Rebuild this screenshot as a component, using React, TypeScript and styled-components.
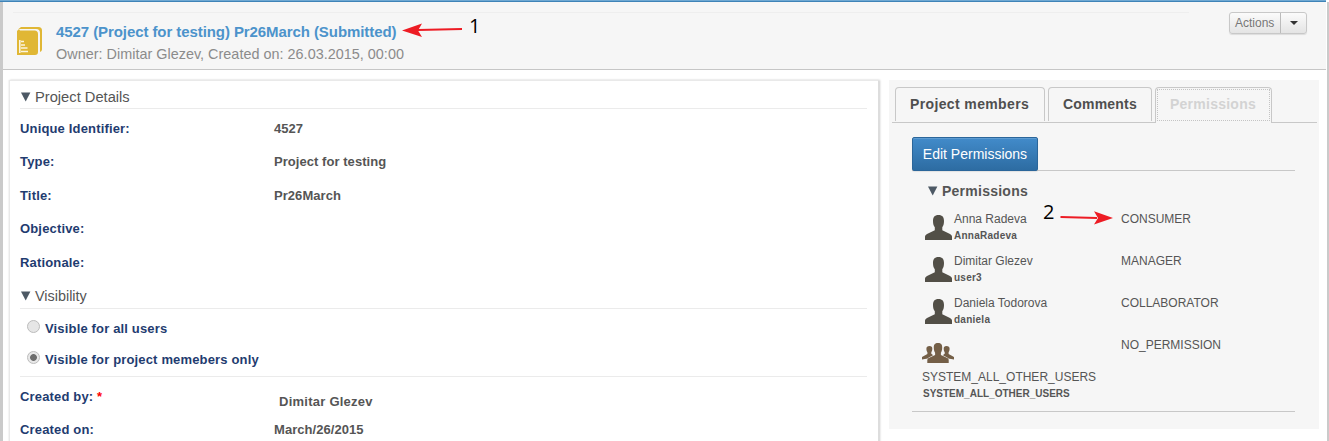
import React from "react";
import styled, { createGlobalStyle } from "styled-components";

const GlobalStyle = createGlobalStyle`
  * { box-sizing: border-box; }
  body {
    margin: 0;
    overflow: hidden;
    background: #fff;
    color: #555;
    font-family: "Liberation Sans", Arial, sans-serif;
  }
`;

const Page = styled.div`
  position: relative;
  width: 1329px;
  height: 441px;
  overflow: hidden;
  display: flex;
  flex-direction: column;
`;

const TopBar = styled.div`
  flex: none;
  width: 1326px;
  height: 2px;
  background: linear-gradient(#6fa8d2 50%, #3f83b7 50%);
`;

const Frame = styled.div`
  flex: 1;
  min-height: 0;
  border-left: 3px solid #cacaca;
  border-right: 2px solid #cacaca;
`;

const Header = styled.header`
  display: flex;
  align-items: flex-start;
  width: 1323px;
  height: 68px;
  padding: 10px 19px 0 10px;
  background: #f6f6f6;
  border-bottom: 1px solid #c6c6c6;
`;

const HeaderMain = styled.div`
  display: flex;
  width: 1176px;
  padding: 14px 0 0 4px;
  border-top: 1px solid #eee;
`;

const HeaderText = styled.div`
  margin: -6px 0 0 14px;
`;

const Title = styled.h1`
  margin: 0;
  font-size: 15px;
  line-height: 22px;
  letter-spacing: -0.08px;
  color: #4c93cb;
  white-space: nowrap;
`;

const Subtitle = styled.div`
  font-size: 14.4px;
  line-height: 22px;
  letter-spacing: 0.02px;
  color: #8b8b8b;
  white-space: nowrap;
`;

const SplitButton = styled.div`
  display: flex;
  height: 22px;
  margin-left: auto;
  border: 1px solid #c8c8c8;
  border-radius: 3px;
  background: linear-gradient(#fbfbfb, #e4e4e4);
  box-shadow: 0 1px 1px rgba(0, 0, 0, 0.1);
  overflow: hidden;
`;

const ActionLabel = styled.span`
  width: 50px;
  padding-left: 5px;
  font-size: 12px;
  line-height: 20px;
  color: #777;
`;

const CaretCell = styled.span`
  display: flex;
  align-items: center;
  justify-content: center;
  width: 26px;
  border-left: 1px solid #bbb;
  padding-bottom: 1px;
`;

const Body = styled.div`
  display: flex;
  align-items: flex-start;
  gap: 10px;
  padding: 10px 0 0 6px;
`;

const Details = styled.main`
  width: 870px;
  height: 380px;
  padding: 2px 11px 0 10px;
  border: 1px solid #e9e9e9;
  border-right-color: #ddd;
  box-shadow: 1px 0 2px rgba(0, 0, 0, 0.2), -1px 0 1px rgba(0, 0, 0, 0.03);
`;

const SectionTitle = styled.div<{ $size: number }>`
  display: flex;
  align-items: center;
  gap: 4px;
  height: 26px;
  padding: 2px 0 0 1px;
  border-bottom: 1px solid #ebebeb;
  font-size: ${(p) => p.$size}px;
  color: #555;
`;

const Fields = styled.div<{ $top: number; $bottom?: number }>`
  padding-top: ${(p) => p.$top}px;
  padding-bottom: ${(p) => p.$bottom ?? 0}px;
`;

const Field = styled.div`
  display: grid;
  grid-template-columns: 254px 1fr;
  height: 33.5px;
  font-size: 13px;
  font-weight: bold;
  line-height: 33px;
`;

const Label = styled.span`
  color: #1f3c70;
  letter-spacing: 0.16px;
`;

const Value = styled.span<{ $nudged?: boolean }>`
  color: #555;
  letter-spacing: ${(p) => (p.$nudged ? 0.25 : 0.05)}px;
  padding: ${(p) => (p.$nudged ? "5px 0 0 5px" : "0")};
`;

const Required = styled.span`
  color: #f00;
`;

const Options = styled.div`
  height: 68px;
  padding: 4px 0 0 7px;
  border-bottom: 1px solid #ebebeb;
`;

const Option = styled.div`
  display: flex;
  align-items: center;
  gap: 5px;
  height: 31px;
  font-size: 13px;
  font-weight: bold;
`;

const Radio = styled.span<{ $on?: boolean }>`
  width: 13px;
  height: 13px;
  margin-top: -4px;
  border: 1px solid #bcbcbc;
  border-radius: 50%;
  background: ${(p) => (p.$on ? "radial-gradient(circle, #6d6d6d 0 3px, #e8e8e8 3.8px)" : "#e6e6e6")};
`;

const Side = styled.aside`
  width: 430px;
  height: 349px;
  padding: 7px 2px 0 3px;
  background: #f6f6f6;
`;

const Tabs = styled.div`
  display: flex;
  gap: 3px;
  height: 36px;
  padding-left: 3px;
  border-bottom: 1px solid #c8c8c8;
`;

const Tab = styled.div<{ $width: number; $active?: boolean; $spacing: number }>`
  width: ${(p) => p.$width}px;
  height: ${(p) => (p.$active ? 36 : 34)}px;
  padding: 1px;
  border: 1px solid #c8c8c8;
  border-bottom: 0;
  border-radius: 4px 4px 0 0;
  background: #f6f6f6;
  color: ${(p) => (p.$active ? "#d3d3d3" : "#4f4f4f")};
  font-size: 14px;
  font-weight: bold;
  letter-spacing: ${(p) => p.$spacing}px;
  line-height: 28px;
  white-space: nowrap;
`;

const TabInner = styled.div<{ $focused?: boolean }>`
  height: 32px;
  padding-left: 12px;
  border: 1px dotted ${(p) => (p.$focused ? "#c4c4c4" : "transparent")};
`;

const Toolbar = styled.div`
  width: 383px;
  height: 48px;
  margin-left: 20px;
  padding-top: 14px;
  border-bottom: 1px solid #c8c8c8;
`;

const EditButton = styled.button`
  display: block;
  width: 126px;
  height: 34px;
  padding: 0;
  border: 1px solid #2b669a;
  border-radius: 2px;
  background: linear-gradient(#428bca, #2d6ca2);
  box-shadow: inset 0 1px 0 rgba(255, 255, 255, 0.15), 0 1px 1px rgba(0, 0, 0, 0.08);
  color: #fff;
  font: 14px "Liberation Sans", Arial, sans-serif;
`;

const Permissions = styled.section`
  width: 383px;
  height: 241px;
  margin-left: 20px;
  padding-left: 10px;
  border-bottom: 1px solid #c8c8c8;
`;

const PermissionsTitle = styled.div`
  display: flex;
  align-items: center;
  gap: 4px;
  height: 39px;
  padding: 1px 0 0 6px;
  font-size: 14px;
  font-weight: bold;
  letter-spacing: 0.25px;
`;

const Member = styled.div`
  display: grid;
  grid-template-columns: 199px 1fr;
  height: 42px;
  font-size: 12px;
  line-height: 19px;
`;

const Person = styled.div`
  display: flex;
  gap: 2px;
  padding-left: 3px;
`;

const Login = styled.div<{ $spacing: number; $left?: number }>`
  padding-left: ${(p) => p.$left ?? 0}px;
  font-size: 10px;
  font-weight: bold;
  line-height: 14px;
  letter-spacing: ${(p) => p.$spacing}px;
`;

const Annotation = styled.div<{ $x: number; $y: number }>`
  position: absolute;
  left: ${(p) => p.$x}px;
  top: ${(p) => p.$y}px;
  display: flex;
  align-items: flex-start;
  color: #000;
  font: 20px/20px "Open Sans", "Noto Sans", sans-serif;
`;

const PersonSvg = styled.svg`
  flex: none;
  margin-top: 5px;
`;

const GroupSvg = styled.svg`
  display: block;
  margin-top: 7px;
  margin-bottom: 5px;
`;

const Triangle = () => (
  <svg width="10" height="10" viewBox="0 0 10 10">
    <path d="M0 .5h9.4L4.7 9.6z" fill="#4d5965" />
  </svg>
);

const ProjectIcon = () => (
  <svg width="25" height="28" viewBox="0 0 25 28">
    <path d="M4 0h17.500Q25 0 25 3.500v19q0 1.500-2 2.500V6q0-4-4-4H1.500z" fill="#e0b735" />
    <path d="M0 4L2 2l1 1.500h14.500q3.500 0 3.500 3.500V25q0 3-3 3H0z" fill="#e0b735" />
    <path d="M2.800 13v13M4 14.500h3M4 18h4M4 21h6.500M4 24.500h7" stroke="#fbf5df" strokeWidth="1.600" fill="none" />
  </svg>
);

const PersonIcon = () => (
  <PersonSvg width="27" height="25" viewBox="0 0 27 25">
    <path
      d="M13.500 0C17.500 0 19 2.300 19 6c0 3-.6 4.700-1.700 6.300v3L25 19q2 1 2 2.500V25H0v-3.500Q0 20 2 19l7.800-3.700v-3C8.600 10.700 8 9 8 6c0-3.700 1.500-6 5.500-6z"
      fill="#524f47"
    />
  </PersonSvg>
);

const GroupIcon = () => (
  <GroupSvg width="32" height="20" viewBox="0 0 32 20">
    <g fill="#745f47">
      <path d="M7.500 3C9.600 3 10.300 4 10.300 5.800c0 1.500-.4 2.700-1 3.500v1.500l2 1.400-5.500 3.300L0 16.500V14l5.400-3V9.300C4.800 8.500 4.400 7.300 4.400 5.800 4.400 4 5.400 3 7.500 3z" />
      <path d="M24.500 3c-2.100 0-2.800 1-2.800 2.800 0 1.500.4 2.700 1 3.500v1.500l-2 1.400 5.500 3.300 5.800 1V14l-5.400-3V9.300c.6-.8 1-2 1-3.500C27.600 4 26.600 3 24.500 3z" />
      <path
        d="M16 0c3.200 0 4.200 1.600 4.200 4.500 0 2.500-.5 4-1.300 5.200v2.200l6.400 3.200q1.400.7 1.400 2V20H5.300v-2.900q0-1.300 1.400-2l6.400-3.200V9.700c-.8-1.200-1.300-2.700-1.300-5.200C11.800 1.600 12.800 0 16 0z"
        stroke="#f6f6f6"
        strokeWidth="1"
        paintOrder="stroke"
      />
    </g>
  </GroupSvg>
);

const details = [
  ["Unique Identifier:", "4527"],
  ["Type:", "Project for testing"],
  ["Title:", "Pr26March"],
  ["Objective:", ""],
  ["Rationale:", ""],
];

const members = [
  ["Anna Radeva", "AnnaRadeva", "CONSUMER"],
  ["Dimitar Glezev", "user3", "MANAGER"],
  ["Daniela Todorova", "daniela", "COLLABORATOR"],
];

export default function App() {
  return (
    <>
      <GlobalStyle />
      <Page>
        <TopBar />
        <Frame>
          <Header>
            <HeaderMain>
              <ProjectIcon />
              <HeaderText>
                <Title>4527 (Project for testing) Pr26March (Submitted)</Title>
                <Subtitle>Owner: Dimitar Glezev, Created on: 26.03.2015, 00:00</Subtitle>
              </HeaderText>
            </HeaderMain>
            <SplitButton>
              <ActionLabel>Actions</ActionLabel>
              <CaretCell>
                <svg width="8" height="4" viewBox="0 0 8 4">
                  <path d="M0 0h8L4 4z" fill="#333" />
                </svg>
              </CaretCell>
            </SplitButton>
          </Header>
          <Body>
            <Details>
              <SectionTitle $size={14.7}>
                <Triangle />
                Project Details
              </SectionTitle>
              <Fields $top={2.9} $bottom={3.6}>
                {details.map(([label, value]) => (
                  <Field key={label}>
                    <Label>{label}</Label>
                    <Value>{value}</Value>
                  </Field>
                ))}
              </Fields>
              <SectionTitle $size={14.4}>
                <Triangle />
                Visibility
              </SectionTitle>
              <Options>
                <Option>
                  <Radio />
                  <Label>Visible for all users</Label>
                </Option>
                <Option>
                  <Radio $on />
                  <Label>Visible for project memebers only</Label>
                </Option>
              </Options>
              <Fields $top={2.9}>
                <Field>
                  <Label>
                    Created by: <Required>*</Required>
                  </Label>
                  <Value $nudged>Dimitar Glezev</Value>
                </Field>
                <Field>
                  <Label>Created on:</Label>
                  <Value>March/26/2015</Value>
                </Field>
              </Fields>
            </Details>
            <Side>
              <Tabs>
                <Tab $width={150} $spacing={0.37}>
                  <TabInner>Project members</TabInner>
                </Tab>
                <Tab $width={104} $spacing={0.2}>
                  <TabInner>Comments</TabInner>
                </Tab>
                <Tab $width={117} $spacing={0.25} $active>
                  <TabInner $focused>Permissions</TabInner>
                </Tab>
              </Tabs>
              <Toolbar>
                <EditButton>Edit Permissions</EditButton>
              </Toolbar>
              <Permissions>
                <PermissionsTitle>
                  <Triangle />
                  Permissions
                </PermissionsTitle>
                {members.map(([name, login, role]) => (
                  <Member key={login}>
                    <Person>
                      <PersonIcon />
                      <div>
                        {name}
                        <Login $spacing={0.25}>{login}</Login>
                      </div>
                    </Person>
                    <span>{role}</span>
                  </Member>
                ))}
                <Member>
                  <div>
                    <GroupIcon />
                    SYSTEM_ALL_OTHER_USERS
                    <Login $spacing={0} $left={1}>
                      SYSTEM_ALL_OTHER_USERS
                    </Login>
                  </div>
                  <span>NO_PERMISSION</span>
                </Member>
              </Permissions>
            </Side>
          </Body>
        </Frame>
        <Annotation $x={402} $y={16}>
          <svg width="67" height="28" viewBox="0 0 67 28">
            <path d="M16 14l44-1" stroke="#ed1c24" strokeWidth="2" />
            <path d="M0 14.500l20-7-4 7 4 6.500z" fill="#ed1c24" />
          </svg>
          1
        </Annotation>
        <Annotation $x={1043} $y={202}>
          2
          <svg width="60" height="28" viewBox="0 0 60 28">
            <path d="M6.500 15L43 16" stroke="#ed1c24" strokeWidth="2" />
            <path d="M59 16L40 9.300l4 6.700-4 6.500z" fill="#ed1c24" />
          </svg>
        </Annotation>
      </Page>
    </>
  );
}
